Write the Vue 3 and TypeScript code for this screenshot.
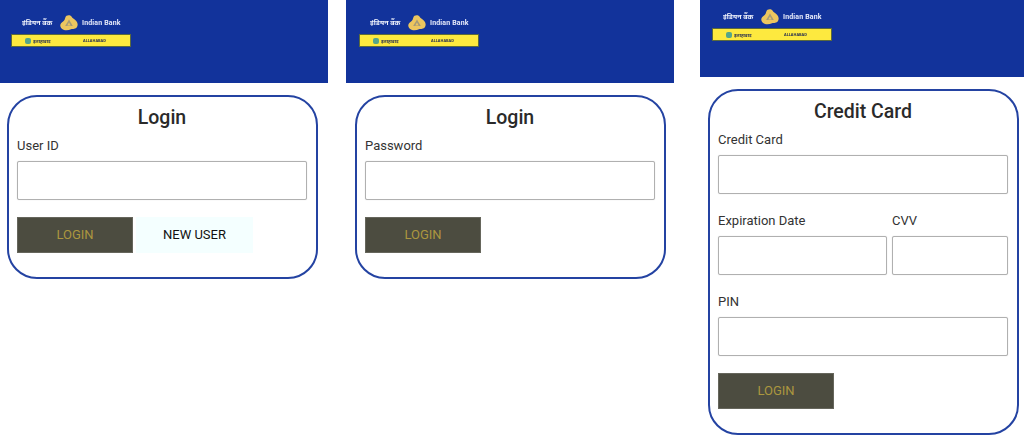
<script setup lang="ts">
interface Field { label: string; width?: number }
interface Panel {
  key: string
  title: string
  rows: Field[][]
  newUser: boolean
}
const panels: Panel[] = [
  { key: 'a', title: 'Login', rows: [[{ label: 'User ID' }]], newUser: true },
  { key: 'b', title: 'Login', rows: [[{ label: 'Password' }]], newUser: false },
  {
    key: 'c',
    title: 'Credit Card',
    rows: [
      [{ label: 'Credit Card' }],
      [{ label: 'Expiration Date', width: 169 }, { label: 'CVV', width: 116 }],
      [{ label: 'PIN' }],
    ],
    newUser: false,
  },
]
</script>

<template>
  <div class="page">
    <section v-for="p in panels" :key="p.key" class="panel" :class="`panel-${p.key}`">
      <header class="banner">
        <div class="brand">
          <div class="brand-top">
            <span class="hindi">इंडियन बैंक</span>
            <svg class="logo" width="18" height="16" viewBox="0 0 18 16" aria-hidden="true">
              <path d="M6.500.8C8-.2 10.500 0 11.500 1.500 12.500 3.200 14 4 15.500 5.200 17.600 6.900 18.300 9.800 17 12 15.600 14.300 13 13.800 11 14.200 8.800 15.400 6 15.800 3.500 14.800 1 13.800-.3 11.500.5 9.200 1.200 7.200 3.600 6.500 4.600 4.700 5.300 3.300 5.300 1.800 6.500.8Z" fill="#ecc65f" />
              <path d="M9 4.500 12.800 11H5.200Z" fill="#a49a78" />
              <path d="M9 7.500 10.700 10.500H7.300Z" fill="#ecc65f" />
            </svg>
            <span class="english">Indian Bank</span>
          </div>
          <div class="strip">
            <span class="strip-mark"></span>
            <span class="strip-text">इलाहाबाद</span>
            <span class="strip-text second">ALLAHABAD</span>
          </div>
        </div>
      </header>

      <form class="card" @submit.prevent>
        <h2 class="title">{{ p.title }}</h2>
        <div v-for="(row, i) in p.rows" :key="i" class="row">
          <label
            v-for="f in row"
            :key="f.label"
            class="field"
            :class="{ fixed: f.width }"
            :style="f.width ? { width: f.width + 'px' } : undefined"
          >
            <span class="label">{{ f.label }}</span>
            <input class="input" type="text" />
          </label>
        </div>
        <div class="actions">
          <button class="btn primary" type="button">LOGIN</button>
          <button v-if="p.newUser" class="btn secondary" type="button">NEW USER</button>
        </div>
      </form>
    </section>
  </div>
</template>

<style>
html, body { margin: 0; background: #fff; overflow: hidden; }
</style>

<style scoped>
.page {
  display: flex;
  width: 1024px;
  height: 437px;
  overflow: hidden;
  font-family: Roboto, "Noto Sans", sans-serif;
  color: #222;
}
.panel { flex: none; box-sizing: border-box; }
.panel-a { width: 328px; margin-right: 18px; }
.panel-b { width: 328px; margin-right: 26px; }
.panel-c { width: 324px; }

.banner {
  height: 83px;
  background: #12339b;
  padding: 13px 0 0 11px;
  box-sizing: border-box;
}
.panel-b .banner { padding-left: 13px; }
.panel-c .banner { height: 77px; padding: 7px 0 0 12px; }

.brand { width: 120px; filter: blur(0.4px); }
.brand-top {
  display: flex;
  align-items: center;
  height: 19px;
  margin-bottom: 2px;
  padding-left: 11px;
}
.hindi {
  width: 30px;
  font: 700 7px "Noto Sans", sans-serif;
  color: #eef1fb;
  white-space: nowrap;
}
.logo { margin: 0 4px 0 8px; flex: none; }
.english {
  font: 700 7px Roboto, sans-serif;
  letter-spacing: 0.15px;
  color: #e6eafa;
  white-space: nowrap;
}
.strip {
  display: flex;
  align-items: center;
  height: 13px;
  box-sizing: border-box;
  background: #fde93f;
  border: 1px solid #5b6a3c;
  padding-left: 13px;
}
.strip-mark {
  width: 6px;
  height: 6px;
  margin-right: 2px;
  background: #55a58a;
  border-radius: 2px;
  flex: none;
}
.strip-text {
  font: 700 4.500px "Noto Sans", sans-serif;
  color: #2b3350;
  white-space: nowrap;
  width: 20px;
}
.strip-text.second { margin-left: 30px; width: 22px; font-size: 3.800px; }

.card {
  width: 311px;
  box-sizing: border-box;
  margin: 12px 0 0 7px;
  padding: 7px 9px 24.500px 8px;
  border: 2px solid #2443a2;
  border-radius: 30px;
  background: #fff;
}
.panel-b .card { margin-left: 9px; }
.panel-c .card { margin-left: 8px; }

.title {
  margin: 0 0 3.500px;
  font-size: 19.500px;
  line-height: 28px;
  font-weight: 500;
  text-align: center;
  color: #2a2a2a;
}
.row { display: flex; gap: 5px; margin-bottom: 16.500px; }
.field { display: flex; flex-direction: column; flex: 1 1 auto; }
.field.fixed { flex: none; }
.label {
  font-size: 13px;
  line-height: 20px;
  margin-bottom: 5px;
  color: #333;
}
.input {
  display: block;
  width: 100%;
  height: 39.500px;
  box-sizing: border-box;
  border: 1px solid #b0b0b0;
  border-radius: 2px;
  box-shadow: 0 0 1px #c8c8c8;
  background: #fff;
  padding: 0 8px;
  outline: none;
}
.actions { display: flex; gap: 3px; }
.btn {
  height: 36px;
  border: 0;
  border-radius: 0;
  font-family: Roboto, sans-serif;
  font-size: 13px;
  padding: 0;
  cursor: pointer;
}
.primary {
  width: 116px;
  background: #4c4c40;
  color: #ab973f;
  box-shadow: inset 0 0 0 1px #66665c;
}
.secondary {
  width: 117px;
  background: #f4ffff;
  color: #111;
}
</style>
